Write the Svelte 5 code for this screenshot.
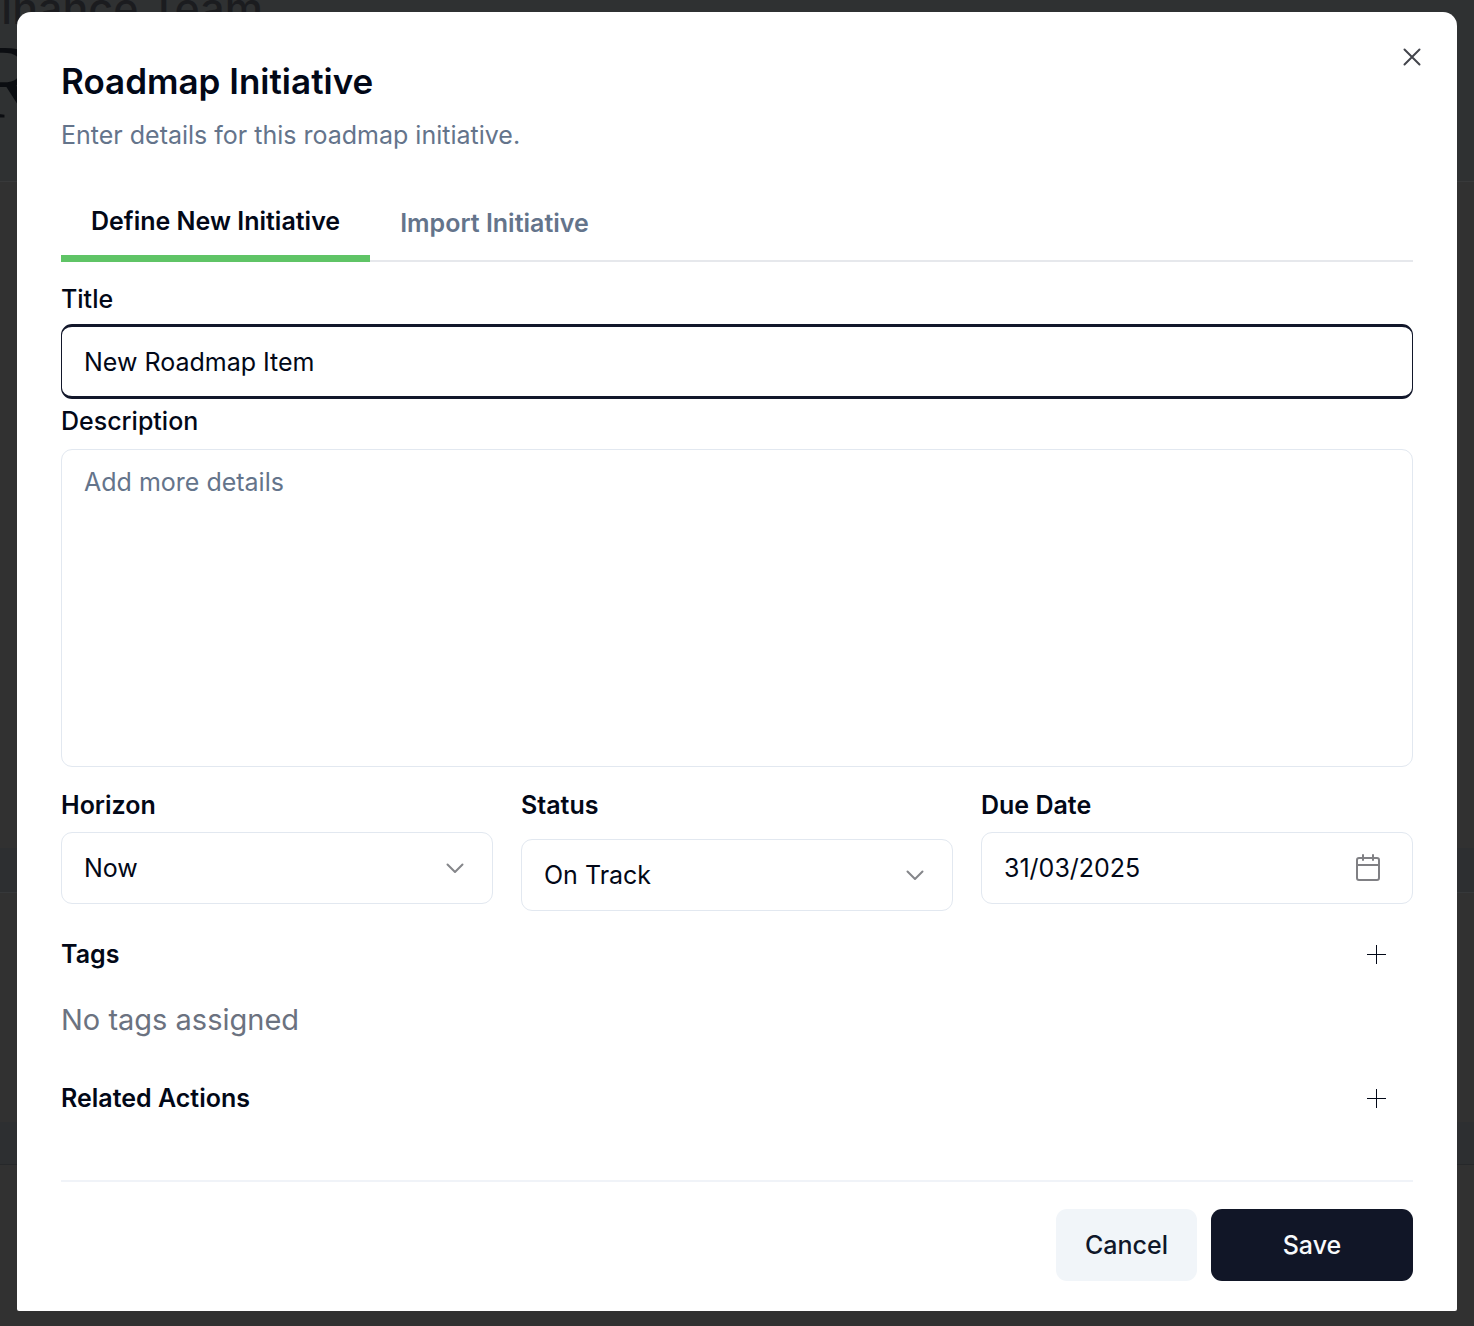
<script>
  let tab = $state('define');
  let title = $state('New Roadmap Item');
  let description = $state('');
  let horizon = $state('Now');
  let status = $state('On Track');
  let dueDate = $state('31/03/2025');
</script>

{#snippet chevron()}
  <svg class="chevron" viewBox="0 0 18 11" aria-hidden="true"><path d="M1.5 1.5 9 9l7.500-7.500" /></svg>
{/snippet}

{#snippet plus()}
  <svg class="plus" viewBox="0 0 19 19" aria-hidden="true"><path d="M9.500 0v19M0 9.500h19" /></svg>
{/snippet}

<div class="page">
  <div class="behind" aria-hidden="true">
    <div class="band header"></div>
    <div class="band upper"></div>
    <div class="band lower"></div>
    <div class="team">Finance Team</div>
    <div class="heading">R</div>
  </div>

  <div class="dialog" role="dialog" aria-modal="true" aria-labelledby="dialog-title">
    <button class="close" type="button" aria-label="Close">
      <svg viewBox="0 0 18 18" aria-hidden="true"><path d="m1.500 1.500 15 15m0-15-15 15" /></svg>
    </button>

    <h1 id="dialog-title">Roadmap Initiative</h1>
    <p class="subtitle">Enter details for this roadmap initiative.</p>

    <div class="tabs" role="tablist">
      <button type="button" role="tab" class:active={tab === 'define'} aria-selected={tab === 'define'} onclick={() => (tab = 'define')}>Define New Initiative</button>
      <button type="button" role="tab" class:active={tab === 'import'} aria-selected={tab === 'import'} onclick={() => (tab = 'import')}>Import Initiative</button>
    </div>

    <form onsubmit={(e) => e.preventDefault()}>
      <div class="field title-field">
        <label for="title">Title</label>
        <input id="title" type="text" bind:value={title} />
      </div>
      <div class="field description-field">
        <label for="description">Description</label>
        <textarea id="description" placeholder="Add more details" bind:value={description}></textarea>
      </div>

      <div class="columns">
        <div class="field">
          <label for="horizon">Horizon</label>
          <div class="control">
            <select id="horizon" bind:value={horizon}>
              <option>Now</option>
              <option>Next</option>
              <option>Later</option>
            </select>
            {@render chevron()}
          </div>
        </div>
        <div class="field status-field">
          <label for="status">Status</label>
          <div class="control">
            <select id="status" bind:value={status}>
              <option>On Track</option>
              <option>At Risk</option>
              <option>Off Track</option>
            </select>
            {@render chevron()}
          </div>
        </div>
        <div class="field">
          <label for="due">Due Date</label>
          <div class="control">
            <input id="due" type="text" bind:value={dueDate} />
            <svg class="calendar" viewBox="0 0 26 28" aria-hidden="true">
              <rect x="2" y="4" width="22" height="22" rx="2" />
              <path d="M8 1v5M18 1v5M2 11h22" />
            </svg>
          </div>
        </div>
      </div>

      <div class="section tags">
        <h2>Tags</h2>
        <button type="button" aria-label="Add tag">{@render plus()}</button>
      </div>
      <p class="empty">No tags assigned</p>
      <div class="section related">
        <h2>Related Actions</h2>
        <button type="button" aria-label="Add related action">{@render plus()}</button>
      </div>

      <footer>
        <button class="cancel" type="button">Cancel</button>
        <button class="save" type="submit">Save</button>
      </footer>
    </form>
  </div>
</div>

<style>
  :global(body) {
    margin: 0;
    background: #313131;
  }

  .page {
    position: relative;
    box-sizing: border-box;
    min-height: 100vh;
    padding: 12px 17px 15px;
    overflow: hidden;
    background: #313131;
    font-family: Inter, 'Liberation Sans', sans-serif;
    font-size: 25px;
    line-height: 36px;
    color: #020817;
  }

  .page *,
  .page *::before {
    box-sizing: border-box;
  }

  .behind {
    position: absolute;
    inset: 0;
    white-space: nowrap;
  }

  .team {
    position: absolute;
    top: -16px;
    left: -24px;
    font-size: 43px;
    line-height: 48px;
    font-weight: 500;
    color: #1b1c1f;
  }

  .heading {
    position: absolute;
    top: 22px;
    left: -28px;
    font-family: 'Liberation Serif', serif;
    font-size: 106px;
    line-height: 120px;
    color: #0b0d11;
  }

  .band {
    position: absolute;
    left: 0;
    right: 0;
    background: #2d2f31;
  }

  .header {
    top: 0;
    height: 182px;
    background: #2f3132;
    border-bottom: 1px solid #38393a;
  }

  .upper {
    top: 848px;
    height: 45px;
    border-bottom: 1px solid #36383a;
  }

  .lower {
    top: 1122px;
    height: 43px;
    border-bottom: 1px solid #26282a;
  }

  .dialog {
    position: relative;
    padding: 44px 44px 30px;
    border-radius: 14px 14px 2px 2px;
    background: #fff;
  }

  button,
  input,
  select,
  textarea {
    margin: 0;
    font: inherit;
    color: inherit;
  }

  button {
    padding: 0;
    border: 0;
    background: none;
    cursor: pointer;
  }

  svg {
    display: block;
    fill: none;
    stroke: currentColor;
    stroke-linecap: round;
    stroke-linejoin: round;
  }

  .close {
    position: absolute;
    top: 27px;
    right: 27px;
    padding: 9px;
    color: #43454c;
  }

  .close svg {
    width: 18px;
    height: 18px;
    stroke-width: 2;
  }

  h1 {
    margin: 0;
    font-size: 35px;
    line-height: 50px;
    font-weight: 600;
  }

  .subtitle {
    margin: 11px 0 0;
    color: #64748b;
  }

  .tabs {
    display: flex;
    height: 74px;
    margin-top: 35px;
    box-shadow: inset 0 -2px #e6e8ec;
  }

  .tabs button {
    padding: 0 30px 2px;
    border-bottom: 3px solid transparent;
    font-weight: 600;
    color: #64748b;
  }

  .tabs button.active {
    border-bottom: 7px solid #5fc466;
    color: #020817;
  }

  .field {
    display: flex;
    flex-direction: column;
    gap: 9px;
  }

  label {
    font-weight: 500;
  }

  .title-field {
    margin-top: 19px;
    gap: 7px;
  }

  .description-field {
    margin-top: 4px;
    gap: 10px;
  }

  input,
  select,
  textarea {
    width: 100%;
    height: 72px;
    padding: 0 22px;
    border: 1px solid #e2e8f0;
    border-radius: 11px;
    outline: 0;
    background: #fff;
  }

  #title {
    height: 75px;
    border: solid #12172a;
    border-width: 3px 1px;
  }

  textarea {
    display: block;
    height: 318px;
    padding: 14px 22px;
    resize: none;
  }

  textarea::placeholder {
    color: #64748b;
    opacity: 1;
  }

  .columns {
    display: grid;
    grid-template-columns: repeat(3, 1fr);
    gap: 28px;
    margin-top: 20px;
  }

  .columns label,
  h2 {
    font-weight: 600;
  }

  .status-field {
    gap: 16px;
  }

  .control {
    position: relative;
  }

  select {
    appearance: none;
  }

  .chevron {
    position: absolute;
    top: 31px;
    right: 29px;
    width: 18px;
    height: 11px;
    stroke-width: 2;
    color: #85868a;
    pointer-events: none;
  }

  .calendar {
    position: absolute;
    top: 22px;
    right: 32px;
    width: 26px;
    height: 28px;
    stroke-width: 2;
    color: #808084;
  }

  .section {
    display: flex;
    align-items: center;
    justify-content: space-between;
  }

  .section button {
    padding: 9px 27px 8px 9px;
    color: #020817;
  }

  .plus {
    width: 19px;
    height: 19px;
    stroke-width: 1;
    stroke-linecap: butt;
  }

  h2 {
    margin: 0;
    font-size: inherit;
  }

  .tags {
    margin-top: 25px;
  }

  .empty {
    margin: 28px 0 0;
    font-size: 29px;
    line-height: 40px;
    color: #6b7280;
  }

  .related {
    margin-top: 40px;
  }

  footer {
    display: flex;
    justify-content: flex-end;
    gap: 14px;
    margin-top: 64px;
    padding-top: 27px;
    border-top: 2px solid #f0f3f8;
  }

  footer button {
    height: 72px;
    padding: 0 29px;
    border-radius: 11px;
    font-weight: 500;
  }

  .cancel {
    background: #f1f5f9;
    color: #0f172a;
  }

  .save {
    min-width: 202px;
    background: #111627;
    color: #f8fafc;
  }
</style>
